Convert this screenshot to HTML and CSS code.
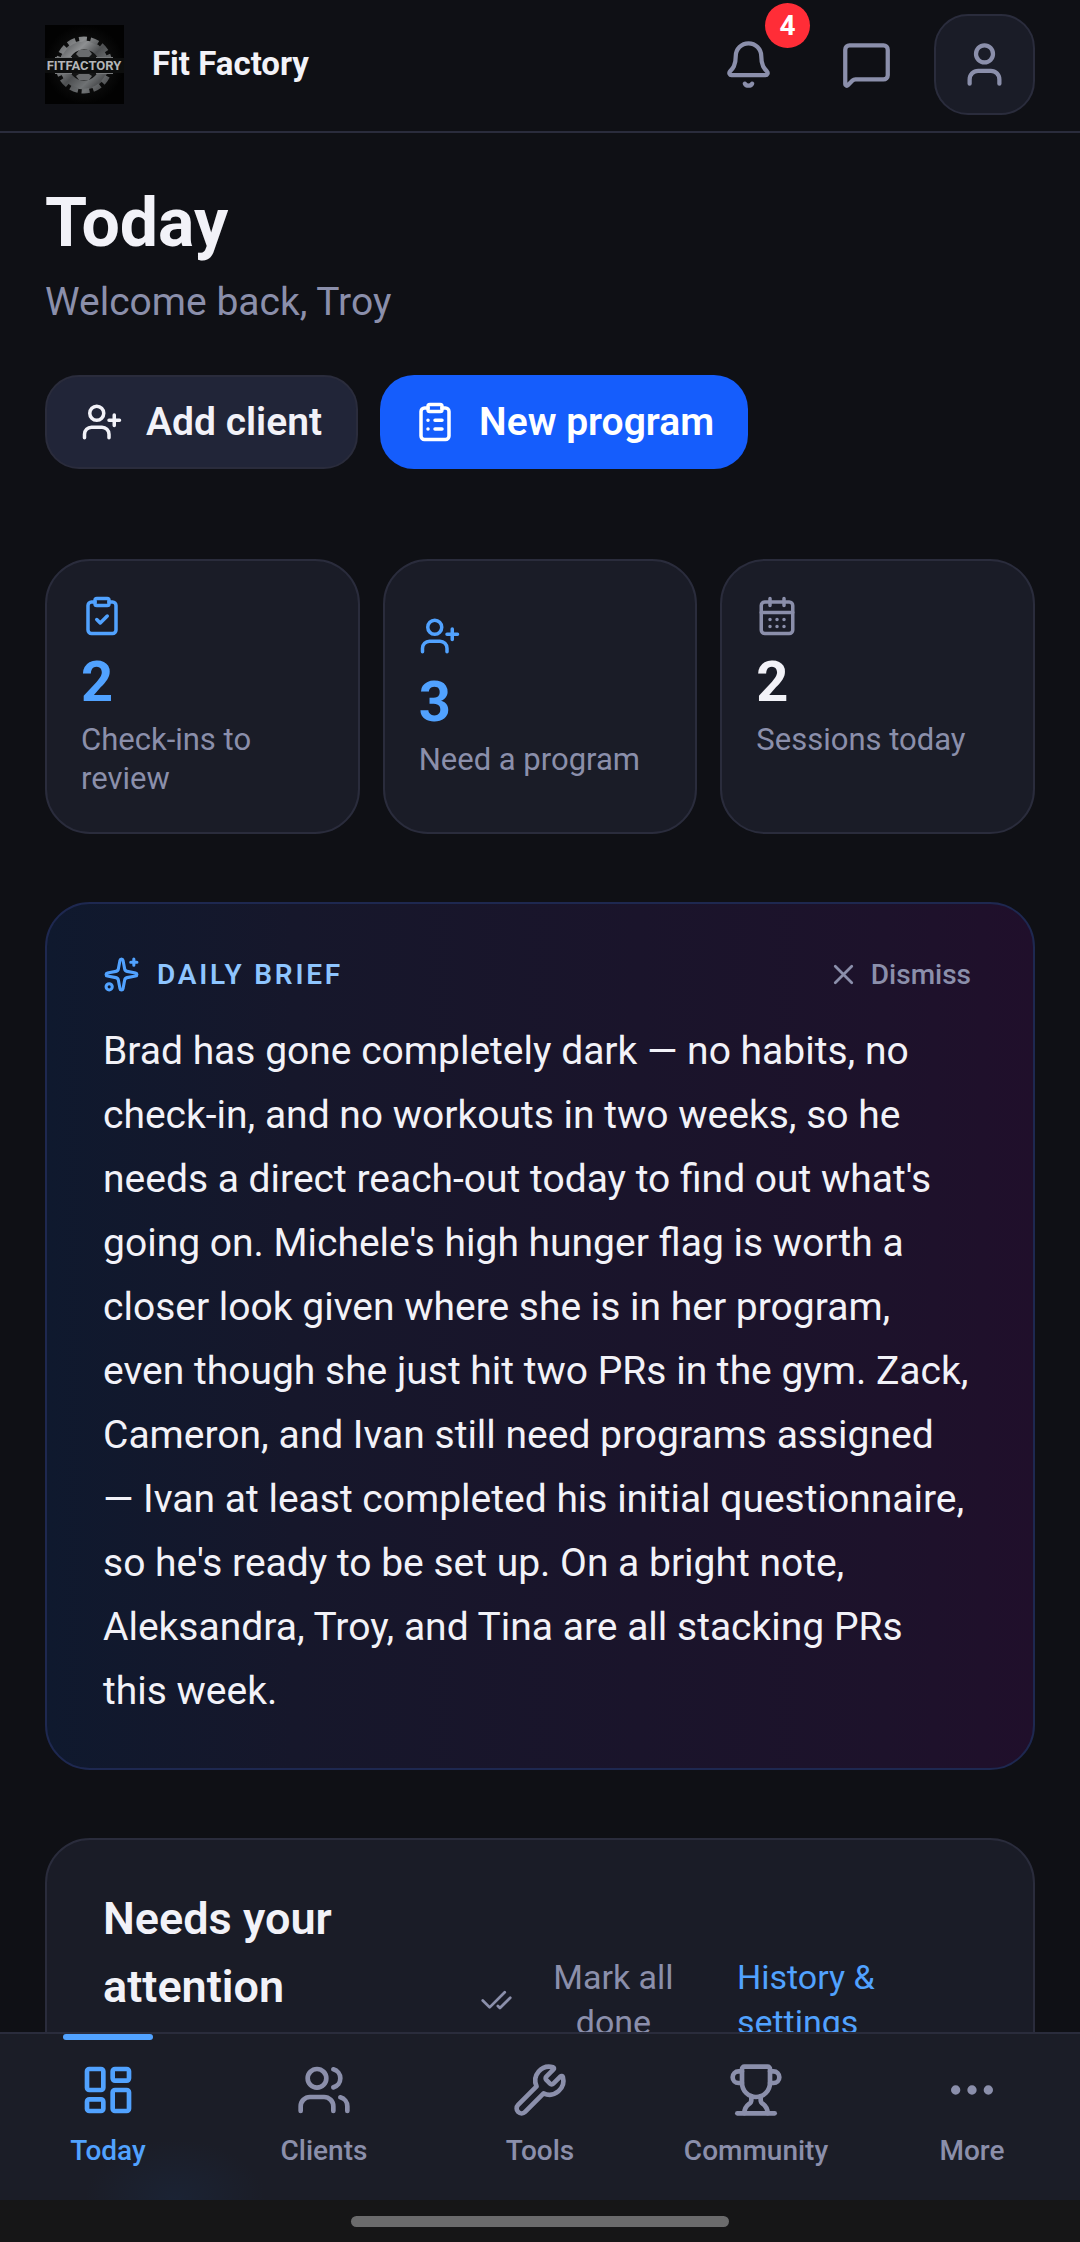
FILE: index.html
```html
<!DOCTYPE html>
<html lang="en">
<head>
    <meta charset="UTF-8">
    <meta name="viewport" content="width=device-width, initial-scale=1.0">
    <title>Fit Factory</title>
    <link rel="stylesheet" href="styles.css">
</head>
<body>
    <div class="app">
        <header class="topbar">
            <a class="brand" href="#">
                <svg class="brand-logo" viewBox="0 0 79 79" aria-hidden="true">
                    <defs>
                        <radialGradient id="logoBg">
                            <stop offset="0" stop-color="#1c1d1d"/>
                            <stop offset="1" stop-color="#020202"/>
                        </radialGradient>
                        <linearGradient id="steel" x1="0" y1="0" x2="1" y2="1">
                            <stop offset="0" stop-color="#5c5e60"/>
                            <stop offset="0.25" stop-color="#8d8f91"/>
                            <stop offset="0.5" stop-color="#4d4f51"/>
                            <stop offset="0.75" stop-color="#6f7274"/>
                            <stop offset="1" stop-color="#3a3b3d"/>
                        </linearGradient>
                    </defs>
                    <rect width="79" height="79" fill="url(#logoBg)"/>
                    <circle cx="39" cy="40" r="20" fill="none" stroke="url(#steel)" stroke-width="9"/>
                    <circle cx="39" cy="40" r="26" fill="none" stroke="url(#steel)" stroke-width="5" stroke-dasharray="8 3.67"/>
                    <path d="M34 25h10l3 4-3 3H34l-3-3zM34 55h10l3-4-3-2H34l-3 2z" fill="#6a6c6e"/>
                    <rect y="33" width="79" height="15" fill="#0d0e0e"/>
                    <path d="M10 32.500h17M51 32.500h17M10 48.500h17M51 48.500h17" stroke="#77797b"/>
                    <text class="brand-logo-text" x="39" y="45" text-anchor="middle">FITFACTORY</text>
                </svg>
                <span class="brand-name">Fit Factory</span>
            </a>
            <div class="topbar-actions">
                <button class="icon-button" type="button" aria-label="Notifications">
                    <svg class="icon icon-lg" viewBox="0 0 24 24"><path d="M10.268 21a2 2 0 0 0 3.464 0"/><path d="M3.262 15.326A1 1 0 0 0 4 17h16a1 1 0 0 0 .74-1.673C19.41 13.956 18 12.499 18 8A6 6 0 0 0 6 8c0 4.499-1.411 5.956-2.738 7.326"/></svg>
                    <span class="badge">4</span>
                </button>
                <button class="icon-button" type="button" aria-label="Messages">
                    <svg class="icon icon-lg" viewBox="0 0 24 24"><path d="M22 17a2 2 0 0 1-2 2H6.828a2 2 0 0 0-1.414.586l-2.202 2.202A.71.71 0 0 1 2 21.286V5a2 2 0 0 1 2-2h16a2 2 0 0 1 2 2z"/></svg>
                </button>
                <button class="icon-button icon-button-filled" type="button" aria-label="Account">
                    <svg class="icon icon-lg" viewBox="0 0 24 24"><path d="M19 21v-2a4 4 0 0 0-4-4H9a4 4 0 0 0-4 4v2"/><circle cx="12" cy="7" r="4"/></svg>
                </button>
            </div>
        </header>

        <main class="content">
            <h1>Today</h1>
            <p class="welcome">Welcome back, Troy</p>

            <div class="quick-actions">
                <button class="btn btn-secondary" type="button">
                    <svg class="icon icon-md" viewBox="0 0 24 24"><path d="M16 21v-2a4 4 0 0 0-4-4H6a4 4 0 0 0-4 4v2"/><circle cx="9" cy="7" r="4"/><path d="M19 8v6M22 11h-6"/></svg>
                    Add client
                </button>
                <button class="btn btn-primary" type="button">
                    <svg class="icon icon-md" viewBox="0 0 24 24"><rect x="8" y="2" width="8" height="4" rx="1"/><path d="M16 4h2a2 2 0 0 1 2 2v14a2 2 0 0 1-2 2H6a2 2 0 0 1-2-2V6a2 2 0 0 1 2-2h2"/><path d="M12 11h4M12 16h4M8 11h.01M8 16h.01"/></svg>
                    New program
                </button>
            </div>

            <div class="stats">
                <button class="stat stat-active" type="button">
                    <svg class="icon icon-md" viewBox="0 0 24 24"><rect x="8" y="2" width="8" height="4" rx="1"/><path d="M16 4h2a2 2 0 0 1 2 2v14a2 2 0 0 1-2 2H6a2 2 0 0 1-2-2V6a2 2 0 0 1 2-2h2"/><path d="m9 14 2 2 4-4"/></svg>
                    <span class="stat-value">2</span>
                    <span class="stat-label">Check-ins to review</span>
                </button>
                <button class="stat stat-active" type="button">
                    <svg class="icon icon-md" viewBox="0 0 24 24"><path d="M16 21v-2a4 4 0 0 0-4-4H6a4 4 0 0 0-4 4v2"/><circle cx="9" cy="7" r="4"/><path d="M19 8v6M22 11h-6"/></svg>
                    <span class="stat-value">3</span>
                    <span class="stat-label">Need a program</span>
                </button>
                <a class="stat" href="#">
                    <svg class="icon icon-md" viewBox="0 0 24 24"><path d="M8 2v4M16 2v4M3 10h18"/><rect x="3" y="4" width="18" height="18" rx="2"/><path d="M8 14h.01M12 14h.01M16 14h.01M8 18h.01M12 18h.01M16 18h.01"/></svg>
                    <span class="stat-value">2</span>
                    <span class="stat-label">Sessions today</span>
                </a>
            </div>

            <section class="card brief">
                <div class="brief-header">
                    <svg class="icon brief-icon" viewBox="0 0 24 24"><path d="M11.017 2.814a1 1 0 0 1 1.966 0l1.051 5.558a2 2 0 0 0 1.594 1.594l5.558 1.051a1 1 0 0 1 0 1.966l-5.558 1.051a2 2 0 0 0-1.594 1.594l-1.051 5.558a1 1 0 0 1-1.966 0l-1.051-5.558a2 2 0 0 0-1.594-1.594l-5.558-1.051a1 1 0 0 1 0-1.966l5.558-1.051a2 2 0 0 0 1.594-1.594z"/><path d="M20 2v4M22 4h-4"/><circle cx="4" cy="20" r="2"/></svg>
                    <h2 class="brief-title">Daily brief</h2>
                    <button class="dismiss" type="button">
                        <svg class="icon icon-sm" viewBox="0 0 24 24"><path d="M18 6 6 18M6 6l12 12"/></svg>
                        Dismiss
                    </button>
                </div>
                <p class="brief-text">Brad has gone completely dark — no habits, no check-in, and no workouts in two weeks, so he needs a direct reach-out today to find out what's going on. Michele's high hunger flag is worth a closer look given where she is in her program, even though she just hit two PRs in the gym. Zack, Cameron, and Ivan still need programs assigned — Ivan at least completed his initial questionnaire, so he's ready to be set up. On a bright note, Aleksandra, Troy, and Tina are all stacking PRs this week.</p>
            </section>

            <section class="card attention">
                <h2 class="attention-title">Needs your attention</h2>
                <button class="mark-done" type="button">
                    <svg class="icon icon-sm" viewBox="0 0 24 24"><path d="M18 6 7 17l-5-5M22 10l-7.5 7.5L13 16"/></svg>
                    <span>Mark all done</span>
                </button>
                <a class="attention-link" href="#">History &amp; settings</a>
            </section>
        </main>

        <nav class="tabbar">
            <a class="tab tab-active" href="#">
                <svg class="icon icon-xl" viewBox="0 0 24 24"><rect x="3" y="3" width="7" height="9" rx="1"/><rect x="14" y="3" width="7" height="5" rx="1"/><rect x="14" y="12" width="7" height="9" rx="1"/><rect x="3" y="16" width="7" height="5" rx="1"/></svg>
                Today
            </a>
            <a class="tab" href="#">
                <svg class="icon icon-xl" viewBox="0 0 24 24"><path d="M16 21v-2a4 4 0 0 0-4-4H6a4 4 0 0 0-4 4v2"/><path d="M16 3.128a4 4 0 0 1 0 7.744"/><path d="M22 21v-2a4 4 0 0 0-3-3.87"/><circle cx="9" cy="7" r="4"/></svg>
                Clients
            </a>
            <a class="tab" href="#">
                <svg class="icon icon-xl" viewBox="0 0 24 24"><path d="M14.7 6.3a1 1 0 0 0 0 1.4l1.6 1.6a1 1 0 0 0 1.4 0l3.106-3.105c.32-.322.863-.22.983.218a6 6 0 0 1-8.259 7.057l-7.91 7.91a1 1 0 0 1-2.999-3l7.91-7.91a6 6 0 0 1 7.057-8.259c.438.12.54.662.219.984z"/></svg>
                Tools
            </a>
            <a class="tab" href="#">
                <svg class="icon icon-xl" viewBox="0 0 24 24"><path d="M10 14.66v1.626a2 2 0 0 1-.976 1.696A5 5 0 0 0 7 21.978"/><path d="M14 14.66v1.626a2 2 0 0 0 .976 1.696A5 5 0 0 1 17 21.978"/><path d="M18 9h1.5a1 1 0 0 0 0-5H18"/><path d="M4 22h16"/><path d="M6 9a6 6 0 0 0 12 0V3a1 1 0 0 0-1-1H7a1 1 0 0 0-1 1z"/><path d="M6 9H4.5a1 1 0 0 1 0-5H6"/></svg>
                Community
            </a>
            <a class="tab" href="#">
                <svg class="icon icon-xl" viewBox="0 0 24 24"><circle cx="12" cy="12" r="1"/><circle cx="19" cy="12" r="1"/><circle cx="5" cy="12" r="1"/></svg>
                More
            </a>
        </nav>
        <div class="home-indicator"></div>
    </div>
</body>
</html>
```

FILE: styles.css
```css
:root {
    --bg: #0f1015;
    --surface: #1a1c27;
    --surface-raised: #212538;
    --border: #2a2c3c;
    --text: #f2f2f8;
    --muted: #8b8fab;
    --blue: #51a2ff;
    --blue-light: #8ec5ff;
    --primary: #155dfc;
    --danger: #ff2d37;
}

* {
    box-sizing: border-box;
}

body {
    margin: 0;
    background-color: var(--bg);
    color: var(--text);
    font-family: Roboto, "Liberation Sans", sans-serif;
    font-size: 39px;
}

h1, h2, p {
    margin: 0;
}

a {
    color: inherit;
    text-decoration: none;
}

button {
    margin: 0;
    padding: 0;
    border: none;
    background: none;
    color: inherit;
    font: inherit;
    cursor: pointer;
}

.icon {
    flex-shrink: 0;
    fill: none;
    stroke: currentColor;
    stroke-width: 2;
    stroke-linecap: round;
    stroke-linejoin: round;
}

.icon-sm {
    width: 33px;
    height: 33px;
}

.icon-md {
    width: 42px;
    height: 42px;
}

.icon-lg {
    width: 51px;
    height: 51px;
}

.icon-xl {
    width: 56px;
    height: 56px;
}

.app {
    display: flex;
    flex-direction: column;
    height: 100vh;
}

/* Top bar */
.topbar {
    display: flex;
    align-items: center;
    justify-content: space-between;
    padding: 14px 45px 16px;
    border-bottom: 2px solid var(--border);
}

.brand {
    display: flex;
    align-items: center;
    gap: 28px;
}

.brand-logo {
    width: 79px;
    height: 79px;
}

.brand-logo-text {
    fill: #b4b6b8;
    font-size: 13px;
    font-weight: 700;
}

.brand-name {
    font-size: 33px;
    font-weight: 700;
    line-height: 45px;
    padding-bottom: 3px;
}

.topbar-actions {
    display: flex;
    gap: 17px;
}

.icon-button {
    position: relative;
    display: flex;
    align-items: center;
    justify-content: center;
    width: 101px;
    height: 101px;
    border: 2px solid transparent;
    border-radius: 34px;
    color: var(--muted);
}

.icon-button-filled {
    background-color: var(--surface);
    border-color: var(--border);
}

.badge {
    position: absolute;
    top: -13px;
    right: -13px;
    min-width: 45px;
    border-radius: 45px;
    background-color: var(--danger);
    color: #ffffff;
    font-size: 28px;
    font-weight: 700;
    line-height: 45px;
    text-align: center;
}

/* Page content */
.content {
    flex: 1;
    min-height: 0;
    padding: 45px 45px 68px;
    overflow-y: auto;
    scrollbar-width: none;
}

h1 {
    font-size: 68px;
    font-weight: 700;
    line-height: 90px;
}

.welcome {
    margin-top: 5px;
    color: var(--muted);
    line-height: 58px;
}

.quick-actions {
    display: flex;
    gap: 22px;
    margin-top: 44px;
}

.btn {
    display: flex;
    align-items: center;
    gap: 23px;
    padding: 17px 34px;
    border-radius: 34px;
    font-weight: 600;
    line-height: 56px;
}

.btn-secondary {
    border: 2px solid var(--border);
    background-color: var(--surface-raised);
}

.btn-primary {
    background-color: var(--primary);
    color: #ffffff;
}

.stats {
    display: grid;
    grid-template-columns: repeat(3, 1fr);
    gap: 23px;
    margin-top: 90px;
}

.stat {
    display: block;
    padding: 34px;
    border: 2px solid var(--border);
    border-radius: 45px;
    background-color: var(--surface);
    color: var(--muted);
    text-align: left;
}

.stat .icon {
    display: block;
}

.stat-value {
    display: block;
    margin-top: 17px;
    color: var(--text);
    font-size: 56px;
    font-weight: 700;
    line-height: 56px;
}

.stat-label {
    display: block;
    margin-top: 10px;
    color: var(--muted);
    font-size: 31px;
    line-height: 39px;
}

.stat-active,
.stat-active .stat-value {
    color: var(--blue);
}

.card {
    margin-top: 68px;
    padding: 45px 56px;
    border: 2px solid var(--border);
    border-radius: 45px;
    background-color: var(--surface);
}

/* Daily brief */
.brief {
    border-color: #1e2850;
    background: linear-gradient(90deg, #0f192e, #16172b 25%, #1a142b 60%, #1d122b 85%, #200f2b);
}

.brief-header {
    display: flex;
    align-items: center;
    gap: 17px;
    height: 51px;
}

.brief-icon {
    width: 37px;
    height: 37px;
    color: var(--blue);
}

.brief-title {
    color: var(--blue-light);
    font-size: 28px;
    font-weight: 600;
    letter-spacing: 0.1em;
    text-transform: uppercase;
}

.dismiss {
    display: flex;
    align-items: center;
    gap: 11px;
    margin-left: auto;
    padding: 6px;
    color: var(--muted);
    font-size: 28px;
    font-weight: 500;
}

.brief-text {
    margin-top: 19px;
    padding-right: 4px;
    line-height: 64px;
}

/* Needs attention */
.attention {
    display: grid;
    grid-template-columns: 20fr 13fr 14fr;
    align-items: start;
    gap: 34px;
}

.attention-title {
    font-size: 45px;
    font-weight: 600;
    line-height: 68px;
}

.mark-done,
.attention-link {
    margin-top: 70px;
    font-size: 34px;
    line-height: 45px;
}

.mark-done {
    display: flex;
    align-items: center;
    gap: 11px;
    color: var(--muted);
}

.mark-done span {
    flex: 1;
}

.attention-link {
    color: var(--blue);
}

/* Bottom tabs */
.tabbar {
    display: flex;
    border-top: 2px solid var(--border);
    background: radial-gradient(ellipse 90px 60px at 175px 100%, #1b2334, transparent) #1b1d27;
}

.tab {
    position: relative;
    display: flex;
    flex: 1;
    flex-direction: column;
    align-items: center;
    gap: 12px;
    padding: 28px 0;
    color: var(--muted);
    font-size: 28px;
    font-weight: 500;
    line-height: 42px;
}

.tab-active {
    color: var(--blue);
}

.tab-active::before {
    content: "";
    position: absolute;
    top: 0;
    width: 90px;
    height: 6px;
    border-radius: 3px;
    background-color: var(--blue);
}

.home-indicator {
    display: flex;
    justify-content: center;
    padding: 16px 0 15px;
    background-color: #161617;
}

.home-indicator::before {
    content: "";
    width: 35%;
    height: 11px;
    border-radius: 6px;
    background-color: #6b6b6c;
}
```
